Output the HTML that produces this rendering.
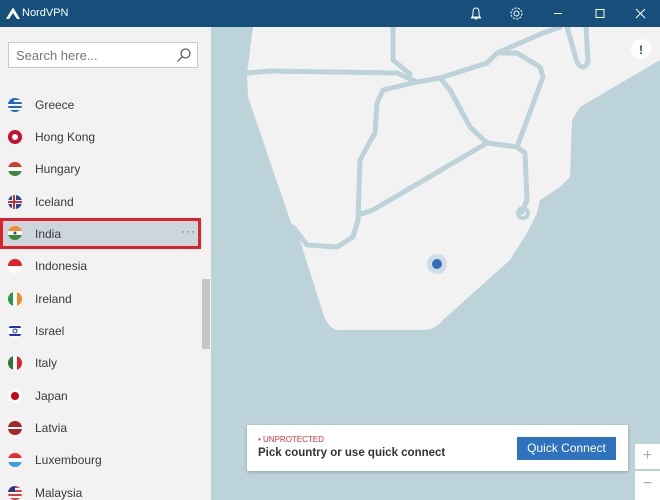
<!DOCTYPE html>
<html><head><meta charset="utf-8"><style>
*{margin:0;padding:0;box-sizing:border-box}
html,body{width:660px;height:500px;overflow:hidden}
body{font-family:"Liberation Sans",sans-serif;background:#bcd3d9;position:relative}
.title{position:absolute;left:0;top:0;width:660px;height:27px;background:#154f7a;color:#fff}
.side{position:absolute;left:0;top:27px;width:211px;height:473px;background:#f2f2f2}
.search{position:absolute;left:8px;top:15px;width:190px;height:26px;background:#fff;border:1px solid #c8c8c8;font-size:13px;color:#777;padding:5px 0 0 7px}
.row{position:absolute;left:0;width:202px;height:30px;font-size:12px;color:#3a3a3a}
.row span{position:absolute;left:35px;top:8px}
.row svg{position:absolute;left:8px;top:8px}
.sel{background:#cdd6dd;border:3px solid #e0202a;left:0;width:201px}
.sb{position:absolute;left:202px;top:252px;width:8px;height:70px;background:#c6c6c6}
</style></head><body>
<div class="title">
<svg width="16" height="14" style="position:absolute;left:5px;top:7px" viewBox="0 0 16 14"><path d="M1 12 L7 2 Q8 0 9 2 L15 12 L12 12 L8 6 L4 12Z" fill="#fff"/></svg>
<span style="position:absolute;left:22px;top:7px;font-size:11px">NordVPN</span>
<svg width="220" height="27" style="position:absolute;left:440px;top:0" viewBox="0 0 220 27" fill="none" stroke="#fff" stroke-width="1">
<path d="M31 18 L41 18 M32 17 Q33 16 33 12 Q33 8 36 8 Q39 8 39 12 Q39 16 40 17Z M35 19 L37 19"/>
<circle cx="76.5" cy="13.5" r="2.5"/><circle cx="76.5" cy="13.5" r="5.5" stroke-dasharray="2.2 1.2"/>
<path d="M114 13.5 L122 13.5"/>
<rect x="156" y="9.5" width="8" height="8"/>
<path d="M196 9 L205 18 M205 9 L196 18"/>
</svg>
</div>
<svg width="449" height="473" style="position:absolute;left:211px;top:27px" viewBox="211 27 449 473">
<path d="M253 27 L660 27 L660 60 L580 107 L572 120 L570 177 L560 187 L540 200 L537 213 L527 233 L510 260 L443 320 Q435 330 423 330 L337 330 Q328 328 323 313 L303 250 L300 240 L290 220 L248 97 L247 73 Z" fill="#f2f2f2"/>
<g fill="none" stroke="#bcd3d9" stroke-width="5" stroke-linecap="round" stroke-linejoin="round">
<path d="M247 73 L270 71 L397 73 L417 82 L440 78 L487 63 L497 53 L543 33 L560 27"/>
<path d="M393 27 L393 60 L410 74"/>
<path d="M417 82 L383 90 L377 103 L375 133 L367 147 L360 160 L358 220 L353 237 L337 247 L307 245 L293 227"/>
<path d="M440 78 L450 90 L470 127 L487 143 L517 147"/>
<path d="M487 143 L373 210 L358 215"/>
<path d="M517 147 L525 153 L527 200 L522 212"/>
<path d="M517 147 L543 77 L540 67 L517 53 L500 53"/>
<path d="M567 27 L577 62 Q583 72 588 62 L586 27"/>
</g>
<circle cx="523" cy="213" r="5" fill="none" stroke="#bcd3d9" stroke-width="4"/>
<circle cx="437" cy="264" r="10" fill="#d0dde8"/>
<circle cx="437" cy="264" r="5" fill="#2f6fba"/>
<circle cx="641" cy="49" r="10" fill="#fff"/>
<text x="641" y="54" font-size="12" font-weight="bold" text-anchor="middle" fill="#154f7a" font-family="Liberation Sans">!</text>
</svg>
<div style="position:absolute;left:247px;top:425px;width:381px;height:46px;background:#fff;box-shadow:0 1px 3px rgba(0,0,0,.25)">
<div style="position:absolute;left:11px;top:10px;font-size:8px;color:#e0303a">• UNPROTECTED</div>
<div style="position:absolute;left:11px;top:22px;font-size:11.5px;font-weight:bold;color:#333">Pick country or use quick connect</div>
<div style="position:absolute;left:270px;top:12px;width:99px;height:23px;background:#2f72bd;color:#fff;font-size:12px;text-align:center;line-height:22px">Quick Connect</div>
</div>
<div style="position:absolute;left:635px;top:444px;width:25px;height:25px;background:#fff;color:#aaa;font-size:16px;text-align:center;line-height:24px">+</div>
<div style="position:absolute;left:635px;top:471px;width:25px;height:29px;background:#fff;color:#aaa;font-size:16px;text-align:center;line-height:26px">−</div>
<div class="side">
<div class="search">Search here...
<svg width="16" height="16" style="position:absolute;right:5px;top:4px" viewBox="0 0 16 16" fill="none" stroke="#555" stroke-width="1.2"><circle cx="9.5" cy="6.5" r="4.5"/><path d="M6.3 9.7 L1.5 14.5"/></svg></div>
<div class="sb"></div>
</div>
<svg width="0" height="0" style="position:absolute"><defs><clipPath id="c"><circle cx="7" cy="7" r="7"/></clipPath></defs></svg>
<div class="row" style="top:90px"><svg width="14" height="14"><g clip-path="url(#c)"><rect width="14" height="14" fill="#fff"/><rect y="0" width="14" height="2" fill="#2466c8"/><rect y="4" width="14" height="2" fill="#2466c8"/><rect y="8" width="14" height="2" fill="#2466c8"/><rect y="12" width="14" height="2" fill="#2466c8"/><rect width="6" height="6" fill="#2466c8"/></g></svg><span>Greece</span></div>
<div class="row" style="top:122px"><svg width="14" height="14"><circle cx="7" cy="7" r="7" fill="#c8102e"/><circle cx="7" cy="7" r="3" fill="#fff"/></svg><span>Hong Kong</span></div>
<div class="row" style="top:154px"><svg width="14" height="14"><g clip-path="url(#c)"><rect width="14" height="5" fill="#d23a2a"/><rect y="5" width="14" height="4" fill="#fff"/><rect y="9" width="14" height="5" fill="#3d8a3b"/></g></svg><span>Hungary</span></div>
<div class="row" style="top:187px"><svg width="14" height="14"><g clip-path="url(#c)"><rect width="14" height="14" fill="#1d4a9a"/><rect x="4" width="4" height="14" fill="#fff"/><rect y="5" width="14" height="4" fill="#fff"/><rect x="5" width="2" height="14" fill="#d72828"/><rect y="6" width="14" height="2" fill="#d72828"/></g></svg><span>Iceland</span></div>
<div class="row sel" style="top:218px;height:31px"><svg width="14" height="14" style="left:5px;top:5px"><g clip-path="url(#c)"><rect width="14" height="5" fill="#f08c2c"/><rect y="5" width="14" height="4" fill="#fff"/><rect y="9" width="14" height="5" fill="#3a8a3a"/><circle cx="7" cy="7" r="1.5" fill="#2a4a9a"/></g></svg><span style="left:32px;top:6px">India</span><span style="left:178px;top:3px;color:#666;letter-spacing:1px">···</span></div>
<div class="row" style="top:251px"><svg width="14" height="14"><g clip-path="url(#c)"><rect width="14" height="7" fill="#e0202a"/><rect y="7" width="14" height="7" fill="#fff"/></g></svg><span>Indonesia</span></div>
<div class="row" style="top:284px"><svg width="14" height="14"><g clip-path="url(#c)"><rect width="5" height="14" fill="#2a9a4a"/><rect x="5" width="4" height="14" fill="#fff"/><rect x="9" width="5" height="14" fill="#f08a2a"/></g></svg><span>Ireland</span></div>
<div class="row" style="top:316px"><svg width="14" height="14"><g clip-path="url(#c)"><rect width="14" height="14" fill="#fff"/><rect y="2" width="14" height="2" fill="#2233bb"/><rect y="10" width="14" height="2" fill="#2233bb"/><circle cx="7" cy="7" r="2" fill="none" stroke="#2233bb"/></g></svg><span>Israel</span></div>
<div class="row" style="top:348px"><svg width="14" height="14"><g clip-path="url(#c)"><rect width="5" height="14" fill="#2a7a3a"/><rect x="5" width="4" height="14" fill="#fff"/><rect x="9" width="5" height="14" fill="#e0202a"/></g></svg><span>Italy</span></div>
<div class="row" style="top:381px"><svg width="14" height="14"><circle cx="7" cy="7" r="7" fill="#fff"/><circle cx="7" cy="7" r="4" fill="#d00010"/></svg><span>Japan</span></div>
<div class="row" style="top:413px"><svg width="14" height="14"><g clip-path="url(#c)"><rect width="14" height="14" fill="#a0282a"/><rect y="6" width="14" height="2" fill="#fff"/></g></svg><span>Latvia</span></div>
<div class="row" style="top:445px"><svg width="14" height="14"><g clip-path="url(#c)"><rect width="14" height="5" fill="#ee2a2a"/><rect y="5" width="14" height="4" fill="#fff"/><rect y="9" width="14" height="5" fill="#3aa0e8"/></g></svg><span>Luxembourg</span></div>
<div class="row" style="top:478px"><svg width="14" height="14"><g clip-path="url(#c)"><rect width="14" height="14" fill="#fff"/><rect y="0" width="14" height="2" fill="#e03a3a"/><rect y="4" width="14" height="2" fill="#e03a3a"/><rect y="8" width="14" height="2" fill="#e03a3a"/><rect y="12" width="14" height="2" fill="#e03a3a"/><rect width="7" height="6" fill="#2a3a8a"/></g></svg><span>Malaysia</span></div>
</body></html>
